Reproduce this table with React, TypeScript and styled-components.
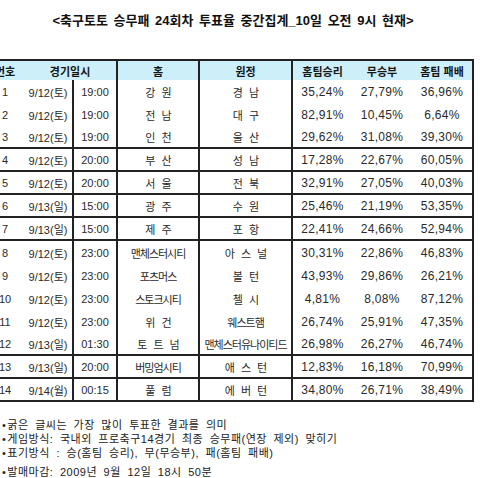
import React from "react";
import styled, { createGlobalStyle } from "styled-components";

const GlobalStyle = createGlobalStyle`
    body {
        margin: 0;
        background: #ffffff;
        font-family: "Liberation Sans", "Noto Sans CJK KR", sans-serif;
        color: #2a2a2a;
    }
`;

const Page = styled.div`
    width: 480px;
    height: 478px;
    overflow: hidden;
`;

const Title = styled.h1`
    margin: 0;
    padding: 13px 14px 0 0;
    height: 16px;
    line-height: 16px;
    text-align: center;
    font-size: 13px;
    font-weight: bold;
    color: #111;
    word-spacing: 2px;
`;

const Table = styled.table`
    margin: 30px 0 0 -14px;
    width: 487px;
    border-collapse: collapse;
    table-layout: fixed;
    font-size: 11px;
`;

const HeadCell = styled.th<{ $left?: boolean; $right?: boolean }>`
    height: 19px;
    padding: 0;
    background: #cdeff9;
    border-top: 2px solid #222;
    border-left: ${(p) => (p.$left ? "2px solid #222" : "none")};
    border-right: ${(p) => (p.$right ? "2px solid #222" : "none")};
    font-weight: bold;
    color: #151515;
    text-align: center;
    white-space: nowrap;
`;

const Cell = styled.td<{ $left?: boolean; $right?: boolean; $bottom?: boolean }>`
    height: ${(p) => (p.$bottom ? "21px" : "23px")};
    padding: 0;
    border-left: ${(p) => (p.$left ? "2px solid #222" : "none")};
    border-right: ${(p) => (p.$right ? "2px solid #222" : "none")};
    border-bottom: ${(p) => (p.$bottom ? "2px solid #222" : "none")};
    text-align: center;
    white-space: nowrap;
    overflow: hidden;
`;

const Team = styled(Cell)`
    letter-spacing: -1px;
    word-spacing: 5px;
`;

const Pct = styled(Cell)`
    font-size: 12px;
    letter-spacing: 0.3px;
`;

const Notes = styled.ul`
    list-style: none;
    margin: 16px 0 0 2px;
    padding: 0;
    font-size: 11px;
    line-height: 14px;
    color: #222;
    letter-spacing: 0.5px;
    word-spacing: 3px;
`;

const Note = styled.li<{ $gap?: boolean }>`
    margin-top: ${(p) => (p.$gap ? "5px" : "0")};
    &::before {
        content: "•";
        margin-right: 1px;
    }
`;

type Game = {
    no: number;
    date: string;
    time: string;
    home: string;
    away: string;
    win: string;
    draw: string;
    lose: string;
    divider?: boolean;
};

const games: Game[] = [
    { no: 1, date: "9/12(토)", time: "19:00", home: "강 원", away: "경 남", win: "35,24%", draw: "27,79%", lose: "36,96%" },
    { no: 2, date: "9/12(토)", time: "19:00", home: "전 남", away: "대 구", win: "82,91%", draw: "10,45%", lose: "6,64%" },
    { no: 3, date: "9/12(토)", time: "19:00", home: "인 천", away: "울 산", win: "29,62%", draw: "31,08%", lose: "39,30%", divider: true },
    { no: 4, date: "9/12(토)", time: "20:00", home: "부 산", away: "성 남", win: "17,28%", draw: "22,67%", lose: "60,05%", divider: true },
    { no: 5, date: "9/12(토)", time: "20:00", home: "서 울", away: "전 북", win: "32,91%", draw: "27,05%", lose: "40,03%", divider: true },
    { no: 6, date: "9/13(일)", time: "15:00", home: "광 주", away: "수 원", win: "25,46%", draw: "21,19%", lose: "53,35%", divider: true },
    { no: 7, date: "9/13(일)", time: "15:00", home: "제 주", away: "포 항", win: "22,41%", draw: "24,66%", lose: "52,94%", divider: true },
    { no: 8, date: "9/12(토)", time: "23:00", home: "맨체스터시티", away: "아 스 널", win: "30,31%", draw: "22,86%", lose: "46,83%" },
    { no: 9, date: "9/12(토)", time: "23:00", home: "포츠머스", away: "볼 턴", win: "43,93%", draw: "29,86%", lose: "26,21%" },
    { no: 10, date: "9/12(토)", time: "23:00", home: "스토크시티", away: "첼 시", win: "4,81%", draw: "8,08%", lose: "87,12%" },
    { no: 11, date: "9/12(토)", time: "23:00", home: "위 건", away: "웨스트햄", win: "26,74%", draw: "25,91%", lose: "47,35%" },
    { no: 12, date: "9/13(일)", time: "01:30", home: "토 트 넘", away: "맨체스터유나이티드", win: "26,98%", draw: "26,27%", lose: "46,74%", divider: true },
    { no: 13, date: "9/13(일)", time: "20:00", home: "버밍엄시티", away: "애 스 턴", win: "12,83%", draw: "16,18%", lose: "70,99%", divider: true },
    { no: 14, date: "9/14(월)", time: "00:15", home: "풀 럼", away: "에 버 턴", win: "34,80%", draw: "26,71%", lose: "38,49%", divider: true },
];

export default function App() {
    return (
        <Page>
            <GlobalStyle />
            <Title>&lt;축구토토 승무패 24회차 투표율 중간집계_10일 오전 9시 현재&gt;</Title>
            <Table>
                <colgroup>
                    <col style={{ width: 38 }} />
                    <col style={{ width: 49 }} />
                    <col style={{ width: 44 }} />
                    <col style={{ width: 82 }} />
                    <col style={{ width: 93 }} />
                    <col style={{ width: 60 }} />
                    <col style={{ width: 60 }} />
                    <col style={{ width: 61 }} />
                </colgroup>
                <thead>
                    <tr>
                        <HeadCell>번호</HeadCell>
                        <HeadCell colSpan={2}>경기일시</HeadCell>
                        <HeadCell $left>홈</HeadCell>
                        <HeadCell $left>원정</HeadCell>
                        <HeadCell $left>홈팀승리</HeadCell>
                        <HeadCell>무승부</HeadCell>
                        <HeadCell $right>홈팀 패배</HeadCell>
                    </tr>
                </thead>
                <tbody>
                    {games.map((g) => (
                        <tr key={g.no}>
                            <Cell $bottom={g.divider}>{g.no}</Cell>
                            <Cell $bottom={g.divider}>{g.date}</Cell>
                            <Cell $left $bottom={g.divider}>{g.time}</Cell>
                            <Team $left $bottom={g.divider}>{g.home}</Team>
                            <Team $left $bottom={g.divider}>{g.away}</Team>
                            <Pct $left $bottom={g.divider}>{g.win}</Pct>
                            <Pct $bottom={g.divider}>{g.draw}</Pct>
                            <Pct $right $bottom={g.divider}>{g.lose}</Pct>
                        </tr>
                    ))}
                </tbody>
            </Table>
            <Notes>
                <Note>굵은 글씨는 가장 많이 투표한 결과를 의미</Note>
                <Note>게임방식: 국내외 프로축구14경기 최종 승무패(연장 제외) 맞히기</Note>
                <Note>표기방식 : 승(홈팀 승리), 무(무승부), 패(홈팀 패배)</Note>
                <Note $gap>발매마감: 2009년 9월 12일 18시 50분</Note>
            </Notes>
        </Page>
    );
}
